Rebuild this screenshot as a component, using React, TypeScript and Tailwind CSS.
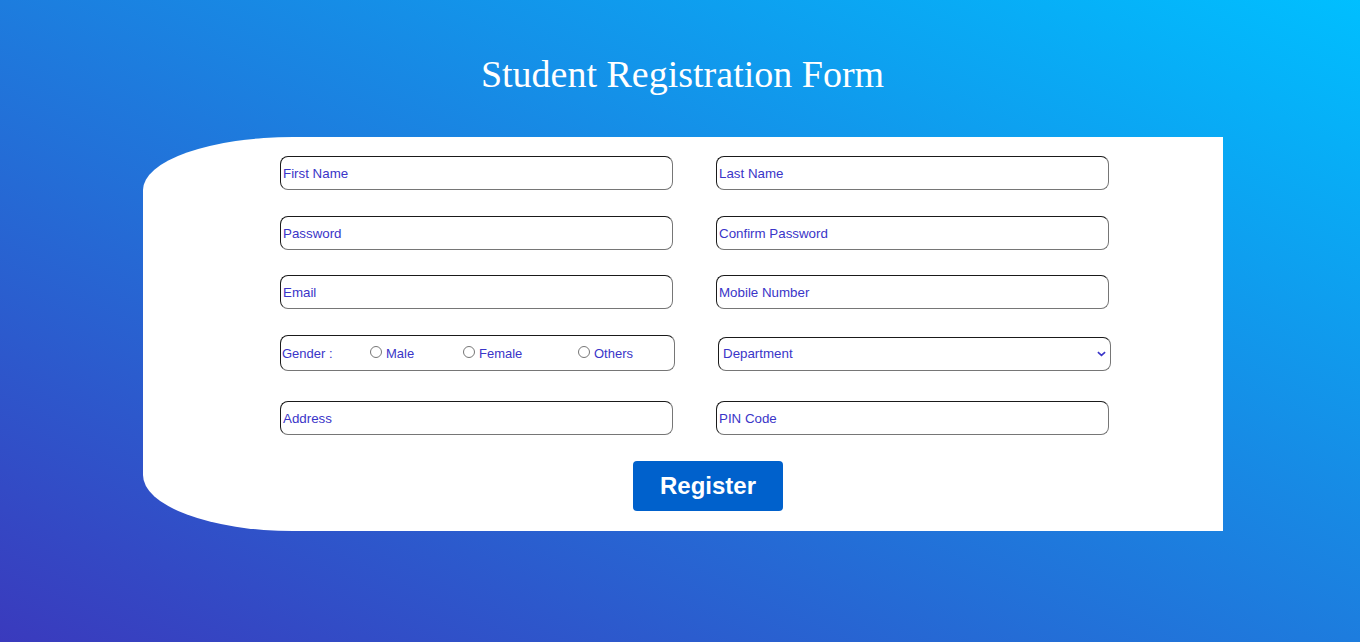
import React from "react";

const field =
  "h-[34px] w-[393px] rounded-lg border border-t-[#1a1a1a] border-l-[#1a1a1a] border-b-[#767676] border-r-[#767676] bg-white px-[2px] text-[13.33px] text-[#3a35c8] placeholder:text-[#3a35c8] outline-none";

function Field({ placeholder, type = "text" }: { placeholder: string; type?: string }) {
  return <input type={type} placeholder={placeholder} className={field} />;
}

export default function App() {
  return (
    <div
      className="h-screen w-full overflow-hidden bg-[linear-gradient(to_top_right,#3a3abd,#00bfff)] pt-[50px]"
      style={{ fontFamily: '"Liberation Sans", Arial, sans-serif' }}
    >
      <h1
        className="pl-[5px] text-center text-[38px] leading-[48px] text-white"
        style={{ fontFamily: '"Liberation Serif", "Times New Roman", serif' }}
      >
        Student Registration Form
      </h1>

      <form className="ml-[143px] mt-[39px] flex h-[394px] w-[1080px] flex-col items-start rounded-tl-[150px_53px] rounded-bl-[150px_56px] bg-white pl-[137px] pt-[19px]">
        <div className="grid w-[829px] grid-cols-[393px_393px] justify-between gap-y-[26px]">
          <Field placeholder="First Name" />
          <Field placeholder="Last Name" />
          <Field placeholder="Password" type="password" />
          <Field placeholder="Confirm Password" type="password" />
          <div className="-mt-[1px]">
            <Field placeholder="Email" type="email" />
          </div>
          <div className="-mt-[1px]">
            <Field placeholder="Mobile Number" />
          </div>
        </div>

        <div className="mt-[26px] flex w-[831px] items-start justify-between">
          <div className="flex h-[36px] w-[395px] items-center rounded-lg border border-t-[#1a1a1a] border-l-[#1a1a1a] border-b-[#767676] border-r-[#767676] pt-[2px] text-[13px] text-[#3a35c8]">
            <span className="w-[89px] pl-[1px]">Gender :</span>
            <label className="flex w-[93px] items-center">
              <input type="radio" name="gender" className="m-0 mr-[4px] h-[12px] w-[12px] -translate-y-[2px]" />
              Male
            </label>
            <label className="flex w-[115px] items-center">
              <input type="radio" name="gender" className="m-0 mr-[4px] h-[12px] w-[12px] -translate-y-[2px]" />
              Female
            </label>
            <label className="flex items-center">
              <input type="radio" name="gender" className="m-0 mr-[4px] h-[12px] w-[12px] -translate-y-[2px]" />
              Others
            </label>
          </div>

          <div className="relative mt-[2px] h-[34px] w-[393px]">
            <select className="h-full w-full appearance-none rounded-lg border border-t-[#1a1a1a] border-l-[#1a1a1a] border-b-[#767676] border-r-[#767676] bg-white pl-[4px] text-[13.33px] text-[#3a35c8] outline-none">
              <option>Department</option>
              <option>Computer Science</option>
              <option>Electronics</option>
              <option>Mechanical</option>
            </select>
            <svg
              viewBox="0 0 10 6"
              className="pointer-events-none absolute right-[5px] top-[14px] h-[6px] w-[9px]"
            >
              <path d="M1 1 L5 4.5 L9 1" fill="none" stroke="#3a35c8" strokeWidth="1.8" />
            </svg>
          </div>
        </div>

        <div className="mt-[30px] grid w-[829px] grid-cols-[393px_393px] justify-between">
          <Field placeholder="Address" />
          <Field placeholder="PIN Code" />
        </div>

        <button
          type="button"
          className="ml-[353px] mt-[26px] h-[50px] w-[150px] rounded-[4px] bg-[#0061cc] text-[24px] font-bold text-white"
        >
          Register
        </button>
      </form>
    </div>
  );
}
